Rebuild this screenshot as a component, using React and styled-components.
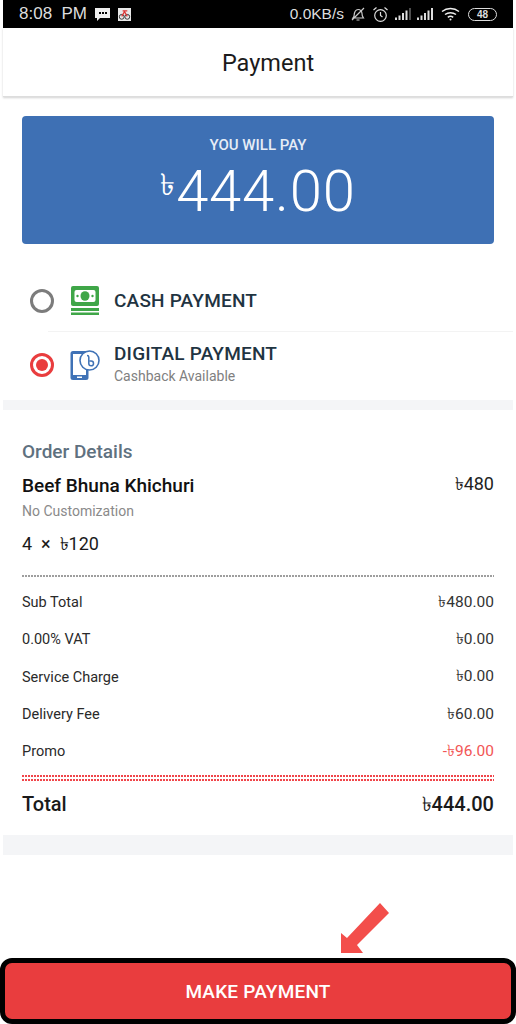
import React from 'react';
import styled, { createGlobalStyle } from 'styled-components';

const GlobalStyle = createGlobalStyle`
	html, body {
		margin: 0;
		padding: 0;
		background: #fff;
	}
	* {
		box-sizing: border-box;
	}
`;

const FONT = `Roboto, "Noto Sans", "DejaVu Sans", sans-serif`;

const charges = [
	{ label: 'Sub Total', value: '৳480.00' },
	{ label: '0.00% VAT', value: '৳0.00' },
	{ label: 'Service Charge', value: '৳0.00' },
	{ label: 'Delivery Fee', value: '৳60.00' },
	{ label: 'Promo', value: '-৳96.00', red: true },
];

const App = () => {
	return (
		<Page>
			<GlobalStyle />
			<StatusBar>
				<StatusGroup>
					<Clock>8:08&nbsp; PM</Clock>
					<svg width="15" height="13" viewBox="0 0 15 13">
						<path d="M0 0h15v10H5l-3 3v-3H0z" fill="#eee" />
						<path d="M4 4h2v2H4zM7 4h2v2H7zM10 4h2v2h-2z" fill="#000" />
					</svg>
					<svg width="13" height="13" viewBox="0 0 14 14">
						<rect width="14" height="14" fill="#e8e8e8" />
						<circle cx="4" cy="9.500" r="2.600" fill="none" stroke="#333" />
						<circle cx="10" cy="9.500" r="2.600" fill="none" stroke="#333" />
						<path d="M4 9l3-5 3 5M5 3h5" fill="none" stroke="#d33" strokeWidth="1.400" />
					</svg>
				</StatusGroup>
				<StatusGroup $tight>
					<Speed>0.0KB/s</Speed>
					<svg width="16" height="16" viewBox="0 0 16 16" fill="none" stroke="#ccc" strokeWidth="1.200">
						<path d="M3 12c1.500-1.500 1-3 1.500-5S7 3.500 8.500 3.500 12 5 12 7.500s.5 3 1.500 4.500zM6.500 14h3M2 14L14 2" />
					</svg>
					<svg width="17" height="17" viewBox="0 0 17 17" fill="none" stroke="#ddd" strokeWidth="1.200">
						<circle cx="8.500" cy="9.500" r="5.800" />
						<path d="M8.500 6v3.500l2 1.500M1.500 4l3-2.500M15.500 4l-3-2.500" />
					</svg>
					<SignalIcon $dim />
					<SignalIcon />
					<WifiIcon width="19" height="14" viewBox="0 0 19 14" fill="none" stroke="#eee" strokeWidth="1.500">
						<path d="M1 4.500C6 .5 13 .5 18 4.500M4 7.500c3.200-2.500 7.800-2.500 11 0M6.800 10.300c1.600-1.200 3.800-1.200 5.400 0" />
						<circle cx="9.500" cy="12.500" r="1" fill="#eee" stroke="none" />
					</WifiIcon>
					<Battery>48</Battery>
				</StatusGroup>
			</StatusBar>

			<TitleBar>Payment</TitleBar>

			<PayCard>
				<PayLabel>YOU WILL PAY</PayLabel>
				<PayAmount>
					<PayCurrency>৳</PayCurrency>444.00
				</PayAmount>
			</PayCard>

			<Methods>
				<Method>
					<Radio />
					<MethodIcon>
						<svg width="28" height="29" viewBox="0 0 28 29">
							<rect width="28" height="20" rx="2" fill="#3fa648" />
							<rect x="3.500" y="4" width="21" height="12" rx="2" fill="#fff" />
							<ellipse cx="14" cy="10" rx="4.500" ry="4.800" fill="#3fa648" />
							<circle cx="6.500" cy="10" r="1.200" fill="#3fa648" />
							<circle cx="21.500" cy="10" r="1.200" fill="#3fa648" />
							<rect y="22" width="28" height="3" fill="#3fa648" />
							<rect y="26.500" width="28" height="2.500" fill="#3fa648" />
						</svg>
					</MethodIcon>
					<MethodName>CASH PAYMENT</MethodName>
				</Method>
				<MethodDivider />
				<Method $tall>
					<Radio $selected />
					<MethodIcon>
						<svg width="30" height="30" viewBox="0 0 30 30">
							<rect x="0.500" y="1" width="18" height="29" rx="2.500" fill="#3f72b6" />
							<rect x="3" y="4" width="13" height="21" fill="#fff" />
							<rect x="7" y="26.500" width="5" height="1.500" fill="#fff" />
							<circle cx="19.500" cy="10.500" r="9.500" fill="#fff" stroke="#3f72b6" strokeWidth="1.600" />
							<path d="M17 5.500c1.200 0 1.800.5 1.800 1.500v6.500c0 1.500 1 2.300 2.300 2.300s2.400-1 2.400-2.400-1-2.300-2.300-2.300h-1.500" fill="none" stroke="#3f72b6" strokeWidth="1.500" />
						</svg>
					</MethodIcon>
					<div>
						<MethodName>DIGITAL PAYMENT</MethodName>
						<MethodNote>Cashback Available</MethodNote>
					</div>
				</Method>
			</Methods>

			<Band $height={10} />

			<Details>
				<SectionTitle>Order Details</SectionTitle>
				<ItemRow>
					<ItemName>Beef Bhuna Khichuri</ItemName>
					<ItemPrice>৳480</ItemPrice>
				</ItemRow>
				<ItemNote>No Customization</ItemNote>
				<ItemQty>4 &nbsp;×&nbsp; ৳120</ItemQty>
				<Dots />
				<Charges>
					{charges.map((c) => (
						<ChargeRow key={c.label}>
							<span>{c.label}</span>
							<ChargeValue $red={c.red}>{c.value}</ChargeValue>
						</ChargeRow>
					))}
				</Charges>
				<Dots $red />
				<Dots $red $second />
				<TotalRow>
					<span>Total</span>
					<span>৳444.00</span>
				</TotalRow>
			</Details>

			<Band $height={20} />

			<Footer>
				<Arrow width="48" height="50" viewBox="0 0 48 50">
					<path d="M39 0l9 10-32 32 6 8H0V30l6 5z" fill="#f34e4b" />
				</Arrow>
				<PayButton>MAKE PAYMENT</PayButton>
			</Footer>
		</Page>
	);
};

export default App;

const SignalIcon = ({ $dim }) => (
	<svg width="16" height="12" viewBox="0 0 16 12" fill="#ddd">
		<rect x="0" y="9.500" width="2" height="2.500" />
		<rect x="3.500" y="7.500" width="2" height="4.500" />
		<rect x="7" y="5" width="2" height="7" />
		<rect x="10.500" y="2.500" width="2" height="9.500" />
		<rect x="14" y="0" width="2" height="12" opacity={$dim ? 0.35 : 1} />
	</svg>
);

const Page = styled.div`
	width: 516px;
	height: 1024px;
	padding: 0 3px;
	display: flex;
	flex-direction: column;
	overflow: hidden;
	background: #fff;
	font-family: ${FONT};
`;
const StatusBar = styled.div`
	height: 28px;
	flex: none;
	background: #000;
	padding: 0 16px;
	display: flex;
	align-items: center;
	justify-content: space-between;
	color: #ddd;
`;
const StatusGroup = styled.div`
	display: flex;
	align-items: center;
	gap: ${(p) => (p.$tight ? '6px' : '8px')};
`;
const Clock = styled.span`
	font-family: "Liberation Sans", sans-serif;
	font-size: 17px;
`;
const Speed = styled.span`
	font-family: "Liberation Sans", sans-serif;
	font-size: 15.5px;
`;
const WifiIcon = styled.svg`
	margin-left: 2px;
`;
const Battery = styled.span`
	width: 29px;
	height: 13px;
	margin-left: 2px;
	border: 1px solid #ddd;
	border-radius: 7px;
	background: #000;
	font-family: "Liberation Sans", sans-serif;
	font-size: 10px;
	font-weight: 700;
	line-height: 11px;
	text-align: center;
`;
const TitleBar = styled.div`
	height: 69px;
	flex: none;
	display: flex;
	align-items: center;
	justify-content: center;
	padding: 1px 0 0 20px;
	font-size: 23.5px;
	color: #1b1b1b;
	border-bottom: 1px solid #ddd;
	box-shadow: 0 1px 2px rgba(0, 0, 0, 0.18);
`;
const PayCard = styled.div`
	flex: none;
	height: 128px;
	margin: 19px 19px 0;
	padding-top: 20px;
	border-radius: 4px;
	background: #3e70b4;
	color: #fff;
	text-align: center;
`;
const PayLabel = styled.div`
	font-size: 15px;
	font-weight: 500;
	line-height: 18px;
	color: #e6edf6;
`;
const PayAmount = styled.div`
	margin-top: 7px;
	font-size: 58px;
	font-weight: 300;
	line-height: 60px;
	letter-spacing: 0.8px;
`;
const PayCurrency = styled.span`
	font-size: 30px;
	vertical-align: 16px;
	line-height: 0;
`;
const Methods = styled.div`
	flex: none;
	padding: 40px 0 0 27px;
	height: 156px;
`;
const Method = styled.div`
	display: flex;
	align-items: center;
	height: ${(p) => (p.$tall ? '66px' : '33px')};
`;
const Radio = styled.span`
	flex: none;
	width: 24px;
	height: 24px;
	border-radius: 50%;
	border: 3px solid ${(p) => (p.$selected ? '#e93d3e' : '#7c7c7c')};
	display: flex;
	align-items: center;
	justify-content: center;
	&::after {
		content: '';
		width: 12px;
		height: 12px;
		border-radius: 50%;
		background: ${(p) => (p.$selected ? '#e93d3e' : 'transparent')};
	}
`;
const MethodIcon = styled.span`
	flex: none;
	width: 30px;
	margin: 0 14px 0 16px;
	display: flex;
	justify-content: center;
`;
const MethodName = styled.div`
	font-size: 19px;
	font-weight: 500;
	line-height: 22px;
	letter-spacing: 0.2px;
	color: #1f3442;
`;
const MethodNote = styled.div`
	font-size: 14px;
	line-height: 22px;
	color: #808080;
`;
const MethodDivider = styled.div`
	height: 1px;
	margin: 14px 0 0 18px;
	background: #f3f3f3;
`;
const Band = styled.div`
	flex: none;
	height: ${(p) => p.$height}px;
	background: #f4f5f7;
`;
const Details = styled.div`
	flex: none;
	height: 425px;
	padding: 30px 19px 0;
`;
const SectionTitle = styled.div`
	font-size: 19px;
	font-weight: 500;
	line-height: 24px;
	color: #5f717f;
`;
const ItemRow = styled.div`
	margin-top: 10px;
	display: flex;
	justify-content: space-between;
	align-items: flex-start;
`;
const ItemName = styled.span`
	font-size: 19px;
	font-weight: 500;
	line-height: 24px;
	color: #111;
`;
const ItemPrice = styled.span`
	font-size: 18px;
	line-height: 20px;
	color: #222;
`;
const ItemNote = styled.div`
	margin-top: 4px;
	font-size: 14px;
	line-height: 18px;
	color: #8a8a8a;
`;
const ItemQty = styled.div`
	margin-top: 13px;
	font-size: 18px;
	line-height: 22px;
	color: #1a1a1a;
`;
const Dots = styled.div`
	margin-top: ${(p) => (p.$red ? (p.$second ? '2px' : '5px') : '20px')};
	height: 2px;
	background-image: linear-gradient(to right, ${(p) => (p.$red ? '#f0454a' : '#8d8d8d')} 2px, transparent 2px);
	background-size: 3px 2px;
	background-repeat: repeat-x;
	opacity: ${(p) => (p.$red ? 1 : 0.85)};
`;
const Charges = styled.div`
	margin-top: 7px;
	display: flex;
	flex-direction: column;
`;
const ChargeRow = styled.div`
	height: 37.3px;
	display: flex;
	align-items: center;
	justify-content: space-between;
	font-size: 14.5px;
	color: #2a2a2a;
`;
const ChargeValue = styled.span`
	font-size: 15.5px;
	color: ${(p) => (p.$red ? '#f25555' : '#333')};
`;
const TotalRow = styled.div`
	margin-top: 11px;
	display: flex;
	justify-content: space-between;
	font-size: 20px;
	font-weight: 500;
	line-height: 24px;
	color: #1a1a1a;
`;
const Footer = styled.div`
	position: relative;
	flex: 1;
	margin: 0 -3px;
	display: flex;
	align-items: flex-end;
`;
const Arrow = styled.svg`
	position: absolute;
	left: 341px;
	top: 48px;
`;
const PayButton = styled.button`
	width: 100%;
	height: 66px;
	padding-top: 2px;
	border: 5px solid #000;
	border-radius: 12px;
	background: #e93d3e;
	color: #fff;
	font-family: ${FONT};
	font-size: 19px;
	font-weight: 500;
	letter-spacing: 0.2px;
`;
